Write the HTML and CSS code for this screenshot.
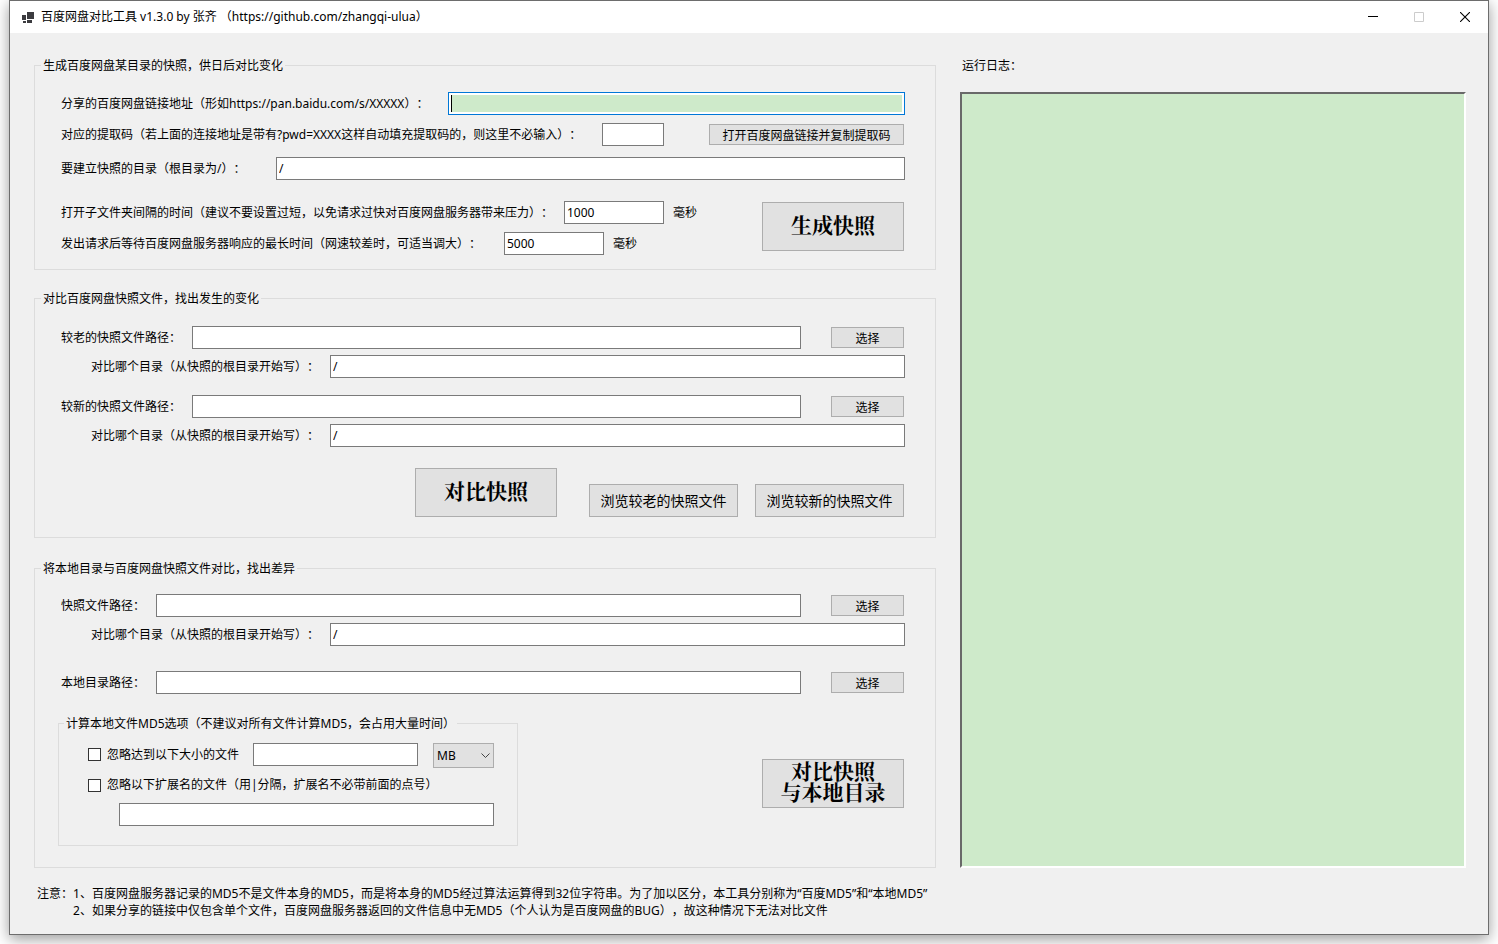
FILE: index.html
```html
<!DOCTYPE html>
<html lang="zh-CN">
<head>
<meta charset="utf-8">
<title>百度网盘对比工具</title>
<link rel="stylesheet" href="styles.css">
</head>
<body>
<div class="window">
  <header class="titlebar">
    <svg class="app-icon" width="13" height="11" viewBox="0 0 13 11" fill="#3b3b3f" aria-hidden="true"><path d="M5 0h7v7H5zM0 3h4v5H0zM1 9h3v2H1zM5 8h5v3H5z"/></svg>
    <h1 class="title">百度网盘对比工具 v1.3.0 by 张齐 （https://github.com/zhangqi-ulua）</h1>
    <button class="winbtn" type="button" aria-label="最小化"><svg width="10" height="10" viewBox="0 0 10 10"><path d="M0 4.5h10" stroke="#000"/></svg></button>
    <button class="winbtn" type="button" aria-label="最大化" disabled><svg width="10" height="10" viewBox="0 0 10 10"><path d="M.5.5h9v9h-9z" stroke="#ccc" fill="none"/></svg></button>
    <button class="winbtn" type="button" aria-label="关闭"><svg width="10" height="10" viewBox="0 0 10 10"><path d="M0 0l10 10M10 0L0 10" stroke="#000" stroke-width="1.1"/></svg></button>
  </header>
  <main class="content">
    <div class="left">
      <fieldset class="group group-create">
        <legend>生成百度网盘某目录的快照，供日后对比变化</legend>
        <div class="row">
          <label class="w-url" for="url">分享的百度网盘链接地址（形如https://pan.baidu.com/s/XXXXX）：</label>
          <input class="grow focused" id="url" type="text">
        </div>
        <div class="row gap-s">
          <label class="w-code" for="code">对应的提取码（若上面的连接地址是带有?pwd=XXXX这样自动填充提取码的，则这里不必输入）：</label>
          <input class="code" id="code" type="text">
          <button class="btn open" type="button">打开百度网盘链接并复制提取码</button>
        </div>
        <div class="row gap-m">
          <label class="w-dir" for="dir">要建立快照的目录（根目录为/）：</label>
          <input class="grow" id="dir" type="text" value="/">
        </div>
        <div class="timing">
          <div>
            <div class="row">
              <label class="w-interval" for="interval">打开子文件夹间隔的时间（建议不要设置过短，以免请求过快对百度网盘服务器带来压力）：</label>
              <input class="ms" id="interval" type="text" value="1000"><span class="unit">毫秒</span>
            </div>
            <div class="row gap-s">
              <label class="w-timeout" for="timeout">发出请求后等待百度网盘服务器响应的最长时间（网速较差时，可适当调大）：</label>
              <input class="ms" id="timeout" type="text" value="5000"><span class="unit">毫秒</span>
            </div>
          </div>
          <button class="btn big" type="button">生成快照</button>
        </div>
      </fieldset>

      <fieldset class="group group-compare">
        <legend>对比百度网盘快照文件，找出发生的变化</legend>
        <div class="row">
          <label class="w-path" for="old">较老的快照文件路径：</label>
          <input class="grow" id="old" type="text">
          <button class="btn pick" type="button">选择</button>
        </div>
        <div class="row gap-xs sub">
          <label class="w-sub" for="olddir">对比哪个目录（从快照的根目录开始写）：</label>
          <input class="grow" id="olddir" type="text" value="/">
        </div>
        <div class="row gap-l">
          <label class="w-path" for="new">较新的快照文件路径：</label>
          <input class="grow" id="new" type="text">
          <button class="btn pick" type="button">选择</button>
        </div>
        <div class="row gap-xs sub">
          <label class="w-sub" for="newdir">对比哪个目录（从快照的根目录开始写）：</label>
          <input class="grow" id="newdir" type="text" value="/">
        </div>
        <div class="actions">
          <button class="btn big main-action" type="button">对比快照</button>
          <button class="btn browse" type="button">浏览较老的快照文件</button>
          <button class="btn browse" type="button">浏览较新的快照文件</button>
        </div>
      </fieldset>

      <fieldset class="group group-local">
        <legend>将本地目录与百度网盘快照文件对比，找出差异</legend>
        <div class="row">
          <label class="w-short" for="snap">快照文件路径：</label>
          <input class="grow" id="snap" type="text">
          <button class="btn pick" type="button">选择</button>
        </div>
        <div class="row gap-xs sub">
          <label class="w-sub" for="snapdir">对比哪个目录（从快照的根目录开始写）：</label>
          <input class="grow" id="snapdir" type="text" value="/">
        </div>
        <div class="row gap-xl">
          <label class="w-short" for="local">本地目录路径：</label>
          <input class="grow" id="local" type="text">
          <button class="btn pick" type="button">选择</button>
        </div>
        <div class="bottom">
          <fieldset class="group options">
            <legend>计算本地文件MD5选项（不建议对所有文件计算MD5，会占用大量时间）</legend>
            <div class="row top">
              <label class="check w-check"><input type="checkbox">忽略达到以下大小的文件</label>
              <input class="grow" type="text" aria-label="文件大小">
              <span class="select"><select aria-label="单位"><option>MB</option></select><svg width="9" height="5" viewBox="0 0 9 5"><path d="M.5.5l4 4 4-4" fill="none" stroke="#444"/></svg></span>
            </div>
            <div class="row ext">
              <label class="check"><input type="checkbox">忽略以下扩展名的文件（用|分隔，扩展名不必带前面的点号）</label>
            </div>
            <div class="row ext-input"><input class="grow" type="text" aria-label="扩展名"></div>
          </fieldset>
          <button class="btn big" type="button">对比快照<br>与本地目录</button>
        </div>
      </fieldset>
    </div>
    <section class="log">
      <label for="log">运行日志：</label>
      <textarea id="log" readonly></textarea>
    </section>
  </main>
  <footer class="notes">
    <span>注意：</span>
    <div>
      <p>1、百度网盘服务器记录的MD5不是文件本身的MD5，而是将本身的MD5经过算法运算得到32位字符串。为了加以区分，本工具分别称为“百度MD5”和“本地MD5”</p>
      <p>2、如果分享的链接中仅包含单个文件，百度网盘服务器返回的文件信息中无MD5（个人认为是百度网盘的BUG），故这种情况下无法对比文件</p>
    </div>
  </footer>
</div>
</body>
</html>
```
FILE: styles.css
```css
* { box-sizing: border-box; }
body {
  margin: 0;
  padding: 0 9px 9px;
  background: #fff;
  overflow: hidden;
}
body, button, input, select, textarea {
  font-family: "Noto Sans", "Noto Sans CJK SC", sans-serif;
  font-size: 12px;
  line-height: 16px;
  color: #000;
  text-spacing-trim: space-all;
}
.window {
  background: #f0f0f0;
  border: 1px solid #6d6d6d;
  box-shadow: 0 4px 14px rgba(0, 0, 0, .4);
}
.titlebar {
  display: flex;
  align-items: center;
  height: 32px;
  padding-left: 12px;
  background: #fff;
}
.app-icon { margin-right: 6px; }
.title {
  flex: 1;
  margin: 0;
  font-size: 12px;
  font-weight: 400;
}
.winbtn {
  display: grid;
  place-items: center;
  width: 46px;
  height: 32px;
  padding: 0;
  border: 0;
  background: none;
}
.content {
  display: grid;
  grid-template-columns: 902fr 506fr;
  gap: 24px;
  padding: 23px 22px 0 24px;
}
.group {
  min-width: 0;
  margin: 0;
  padding: 19px 30px 14px 26px;
  border: 1px solid #dcdcdc;
}
.group legend {
  margin-left: -20px;
  padding: 2px 2px 0;
}
.group-create { padding-top: 18px; }
.group-compare { margin-top: 19px; padding-bottom: 20px; }
.group-local { margin-top: 21px; padding-top: 17px; padding-bottom: 21px; }

.row {
  display: flex;
  align-items: center;
}
.row label { flex: none; white-space: nowrap; }
.gap-xs { margin-top: 6px; }
.gap-s { margin-top: 8px; }
.gap-m { margin-top: 11px; }
.gap-l { margin-top: 17px; }
.gap-xl { margin-top: 25px; }
.sub { padding-left: 30px; }
.w-url { width: 387px; }
.w-code { width: 541px; }
.w-dir { width: 215px; }
.w-interval { width: 503px; }
.w-timeout { width: 443px; }
.w-path { width: 131px; }
.w-short { width: 95px; }
.w-sub { width: 239px; }
.w-check { width: 165px; }

input[type="text"] {
  height: 23px;
  min-width: 0;
  padding: 2px;
  border: 1px solid #7a7a7a;
  border-radius: 0;
  background: #fff;
}
input.grow { flex: 1; }
input.code { width: 62px; }
input.ms { width: 100px; }
.unit { margin-left: 9px; }
input.focused {
  border-color: #0078d7;
  background:
    linear-gradient(#000, #000) content-box left / 1px 100% no-repeat,
    linear-gradient(#ceeaca, #ceeaca) content-box,
    #fff;
}

.btn {
  flex: none;
  margin-right: 1px;
  padding: 0;
  border: 1px solid #adadad;
  background: #e1e1e1;
}
.open, .pick { height: 21px; padding-top: 2px; }
.open { width: 195px; margin-left: auto; }
.pick { width: 73px; margin-left: 30px; }
.big {
  width: 142px;
  height: 49px;
  font-family: "Liberation Serif", "Noto Serif CJK SC", "Noto Sans CJK SC", serif;
  font-size: 21px;
  font-weight: 700;
  line-height: 21px;
}
.browse {
  width: 149px;
  height: 33px;
  font-size: 14px;
}
.timing {
  display: flex;
  align-items: flex-start;
  justify-content: space-between;
  margin-top: 21px;
}
.timing .big { margin-top: 1px; }
.actions {
  display: flex;
  align-items: flex-end;
  justify-content: flex-end;
  gap: 16px;
  margin-top: 21px;
}
.main-action { margin-right: 16px; }

.bottom {
  display: flex;
  align-items: center;
  justify-content: space-between;
  margin: 20px 0 0 -3px;
}
.bottom .big { margin-top: 6px; }
.options {
  width: 460px;
  padding: 11px 23px 19px 29px;
}
.options legend { margin-left: -24px; }
.row.top { align-items: flex-start; }
.row.top .check { line-height: 23px; }
.check { display: flex; align-items: center; }
.check input {
  appearance: none;
  width: 13px;
  height: 13px;
  margin: 0 6px 0 0;
  border: 1px solid #333;
  background: #fff;
}
.select {
  position: relative;
  display: block;
  width: 61px;
  height: 25px;
  margin-left: 15px;
}
.select select {
  appearance: none;
  width: 100%;
  height: 100%;
  padding: 0 3px;
  border: 1px solid #adadad;
  border-radius: 0;
  background: #e1e1e1;
}
.select svg {
  position: absolute;
  top: 10px;
  right: 4px;
  pointer-events: none;
}
.ext { margin-top: 9px; }
.ext-input { margin-top: 10px; padding-left: 31px; }

.log { display: flex; flex-direction: column; }
.log label { padding: 2px 0 0 2px; }
.log textarea {
  flex: 1;
  width: 100%;
  margin-top: 18px;
  resize: none;
  border: 2px solid;
  border-color: #696969 #fff #fff #696969;
  border-radius: 0;
  background: #ceeaca;
}
.notes {
  display: flex;
  padding: 17px 24px 15px 27px;
  line-height: 17px;
}
.notes p { margin: 0; }
```
